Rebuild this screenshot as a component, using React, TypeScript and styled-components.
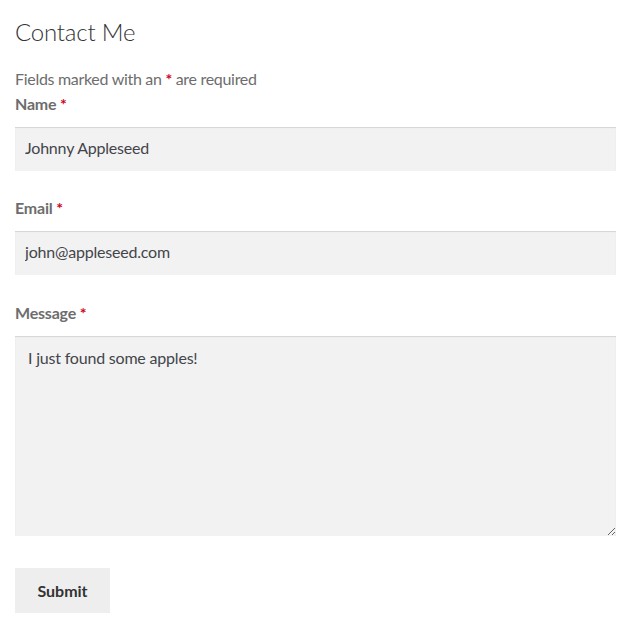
import * as React from 'react';
import styled, { createGlobalStyle } from 'styled-components';

const GlobalStyle = createGlobalStyle`
	body {
		margin: 0;
		background: #ffffff;
		font-family: 'Lato', 'Noto Sans', sans-serif;
		color: #43454b;
	}
`;

const App = () => {
	const [name, setName] = React.useState('Johnny Appleseed');
	const [email, setEmail] = React.useState('john@appleseed.com');
	const [message, setMessage] = React.useState('I just found some apples!');

	return (
		<>
			<GlobalStyle />
			<Page>
				<Title>Contact Me</Title>
				<Note>
					Fields marked with an <Req>*</Req> are required
				</Note>
				<Form onSubmit={(e) => e.preventDefault()}>
					<Field>
						<Label>
							Name <Req>*</Req>
						</Label>
						<Input value={name} onChange={(e) => setName(e.target.value)} />
					</Field>
					<Field>
						<Label>
							Email <Req>*</Req>
						</Label>
						<Input value={email} onChange={(e) => setEmail(e.target.value)} />
					</Field>
					<Field>
						<Label>
							Message <Req>*</Req>
						</Label>
						<TextArea value={message} onChange={(e) => setMessage(e.target.value)} />
					</Field>
					<SubmitButton type="submit">Submit</SubmitButton>
				</Form>
			</Page>
		</>
	);
};

export default App;

const Page = styled.div`
	padding: 14px 21px 0 15px;
`;

const Title = styled.h2`
	margin: 0;
	font-size: 24px;
	font-weight: 300;
	line-height: 36px;
	letter-spacing: -0.2px;
	color: #333333;
`;

const Note = styled.p`
	margin: 17px 0 0;
	font-size: 16px;
	line-height: 24px;
	letter-spacing: -0.3px;
	color: #6d6d6d;
`;

const Req = styled.span`
	color: #d0021b;
	font-weight: 700;
`;

const Form = styled.form`
	display: flex;
	flex-direction: column;
	align-items: flex-start;
	margin-top: 1px;
`;

const Field = styled.div`
	width: 100%;
	margin-bottom: 26px;
	&:first-of-type {
		margin-bottom: 25px;
	}
	&:last-of-type {
		margin-bottom: 32px;
	}
`;

const Label = styled.label`
	display: block;
	font-size: 16px;
	font-weight: 700;
	line-height: 24px;
	letter-spacing: -0.2px;
	color: #6d6d6d;
	margin-bottom: 11px;
`;

const Input = styled.input`
	display: block;
	width: 100%;
	height: 44px;
	box-sizing: border-box;
	padding: 0 10px 3px;
	border: 0;
	background: #f2f2f2;
	box-shadow: inset 0 1px 1px rgba(0, 0, 0, 0.125);
	font-family: inherit;
	font-size: 16px;
	letter-spacing: -0.2px;
	color: #43454b;
	outline: none;
`;

const TextArea = styled.textarea`
	display: block;
	width: 100%;
	height: 200px;
	box-sizing: border-box;
	padding: 10px 13px;
	border: 0;
	background: #f2f2f2;
	box-shadow: inset 0 1px 1px rgba(0, 0, 0, 0.125);
	font-family: inherit;
	font-size: 16px;
	line-height: 24px;
	letter-spacing: -0.2px;
	color: #43454b;
	resize: vertical;
	outline: none;
`;

const SubmitButton = styled.button`
	width: 95px;
	height: 45px;
	padding: 0;
	border: 0;
	background: #eeeeee;
	font-family: inherit;
	font-size: 16px;
	font-weight: 700;
	color: #333333;
	cursor: pointer;
`;
